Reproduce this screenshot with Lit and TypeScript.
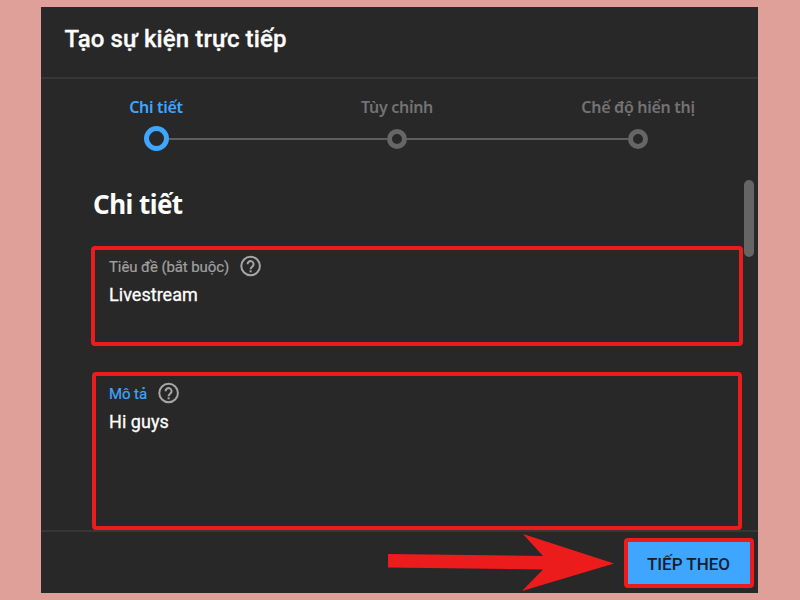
import { LitElement, html, css } from "lit";
import { customElement, property } from "lit/decorators.js";

@customElement("help-icon")
class HelpIcon extends LitElement {
  static styles = css`
    :host { display: block; width: 22px; height: 22px; }
    svg { display: block; }
  `;
  render() {
    return html`<svg width="22" height="22" viewBox="0 0 22 22">
      <circle cx="10.600" cy="11" r="9.300" fill="none" stroke="#a6a6a6" stroke-width="2" />
      <path d="M7.600 9.200a3 3 0 1 1 5 2.100c-1.100 1-2 1.500-2 3" fill="none" stroke="#a6a6a6" stroke-width="2" />
      <rect x="9.600" y="15.300" width="2" height="2" fill="#a6a6a6" />
    </svg>`;
  }
}

@customElement("step-item")
class StepItem extends LitElement {
  @property() label = "";
  @property({ type: Boolean, reflect: true }) active = false;
  static styles = css`
    :host { display: flex; flex-direction: column; align-items: center; width: 241px; flex: none; color: #737373; }
    :host([active]) { color: #3ea6ff; }
    .label { font: 600 16px/22px "Noto Sans", sans-serif; letter-spacing: -0.300px; height: 22px; white-space: nowrap; }
    .track { display: flex; align-items: center; width: 100%; height: 25px; margin-top: 8px; }
    .line { flex: 1; height: 2px; background: #5e5e5e; }
    .dot { box-sizing: border-box; width: 20px; height: 20px; border: 5px solid #666; border-radius: 50%; }
    :host([active]) .dot { width: 25px; height: 25px; border-color: #3ea6ff; }
    :host(:first-child) .line:first-child, :host(:last-child) .line:last-child { background: none; }
  `;
  render() {
    return html`<div class="label">${this.label}</div>
      <div class="track"><i class="line"></i><i class="dot"></i><i class="line"></i></div>`;
  }
}

@customElement("form-field")
class FormField extends LitElement {
  @property() label = "";
  @property() value = "";
  @property({ type: Boolean, reflect: true }) focused = false;
  static styles = css`
    :host { display: block; box-sizing: border-box; border: 4px solid #ed1c1c; border-radius: 4px; font-family: Roboto, sans-serif; }
    .head { display: flex; align-items: center; gap: 11px; height: 22px; color: #a0a0a0; font-size: 15px; letter-spacing: -0.100px; -webkit-text-stroke: 0.200px; }
    .head span { line-height: 24px; padding-top: 2px; }
    :host([focused]) .head { color: #3ea6ff; }
    .value { color: #fff; font-size: 18px; line-height: 24px; margin-top: 6px; letter-spacing: 0.040px; -webkit-text-stroke: 0.300px; }
  `;
  render() {
    return html`<div class="head"><span>${this.label}</span><help-icon></help-icon></div>
      <div class="value">${this.value}</div>`;
  }
}

@customElement("app-root")
class AppRoot extends LitElement {
  static styles = css`
    :host { display: block; box-sizing: border-box; width: 800px; height: 600px; padding: 7px 42px 7px 41px; background: #dfa09a; overflow: hidden; font-family: Roboto, sans-serif; }
    .dialog { display: flex; flex-direction: column; height: 586px; background: #282828; }
    header { box-sizing: border-box; height: 72px; border-bottom: 2px solid #363636; padding: 16px 23.500px; color: #fff; font-size: 24px; line-height: 32px; font-weight: 500; letter-spacing: 0.120px; -webkit-text-stroke: 0.300px; flex: none; }
    .steps { display: flex; justify-content: center; height: 64px; padding-top: 17px; margin-right: 5px; flex: none; }
    .body { display: flex; margin-top: 16px; flex: 1; min-height: 0; }
    .form { width: 652px; margin-left: 50px; }
    h2 { margin: 10px 0 0 2px; font: 700 26px/36px "Noto Sans", sans-serif; letter-spacing: -0.550px; color: #fff; height: 36px; }
    .title { height: 100px; margin-top: 24px; padding: 5px 14px; }
    .desc { height: 158px; width: 650px; margin: 26px 0 0 1px; padding: 6px 13px; }
    .thumb { width: 10px; height: 77px; border-radius: 5px; background: #656565; margin: 4px 0 0 1px; }
    footer { box-sizing: border-box; height: 63px; border-top: 2px solid #363636; display: flex; justify-content: flex-end; padding: 6px 4px 0 0; flex: none; }
    .arrow { display: block; flex: none; margin: -6px 9px 0 0; }
    button { box-sizing: border-box; width: 130px; height: 50px; border: 4px solid #ed1c1c; border-radius: 4px; background: #3ea6ff; color: #14202b; font: 500 17px/24px Roboto, sans-serif; padding: 2px 1px 0 0; }
  `;
  render() {
    return html`<div class="dialog">
      <header>Tạo sự kiện trực tiếp</header>
      <nav class="steps">
        <step-item label="Chi tiết" active></step-item>
        <step-item label="Tùy chỉnh"></step-item>
        <step-item label="Chế độ hiển thị"></step-item>
      </nav>
      <div class="body">
        <div class="form">
          <h2>Chi tiết</h2>
          <form-field class="title" label="Tiêu đề (bắt buộc)" value="Livestream"></form-field>
          <form-field class="desc" label="Mô tả" value="Hi guys" focused></form-field>
        </div>
        <div class="thumb"></div>
      </div>
      <footer>
        <svg class="arrow" width="228" height="60" viewBox="387 532 228 60" fill="#ed1c1c">
          <path d="M388 554L543 556L523 534L614 563.500L522 591L543 569.500L388 567.500Z" />
        </svg>
        <button>TIẾP THEO</button>
      </footer>
    </div>`;
  }
}
